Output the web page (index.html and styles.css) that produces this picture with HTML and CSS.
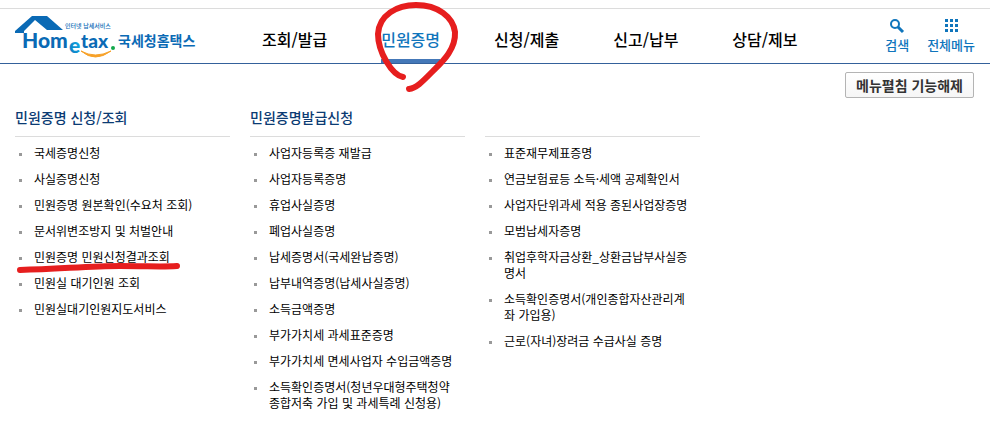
FILE: index.html
```html
<!DOCTYPE html>
<html lang="ko">

<head>
  <meta charset="UTF-8">
  <meta name="viewport" content="width=device-width, initial-scale=1.0">
  <title>국세청 홈택스</title>
  <link rel="stylesheet" href="styles.css">
</head>

<body>
  <header class="header">
    <a class="logo" href="#" aria-label="국세청홈택스">
      <svg width="182" height="46" viewBox="14 14 182 46">
        <defs>
          <linearGradient id="e-fill" x1="0" y1="1" x2="1" y2="0">
            <stop offset="0" stop-color="#0a73bd" />
            <stop offset="1" stop-color="#16b9ec" />
          </linearGradient>
        </defs>
        <path class="logo-blue" d="M32 16H47L63 30H47L35 20L24 31V33H15V31Z" />
        <text class="logo-blue logo-en" x="22" y="48" font-size="21">Hom</text>
        <text class="logo-en" x="69" y="53" font-size="21" fill="url(#e-fill)">e</text>
        <text class="logo-blue logo-en" x="81" y="48" font-size="19">tax</text>
        <circle cx="113" cy="48" r="2" fill="#12a84b" />
        <path d="M81 51Q95 63 111 51Q95 59 81 51Z" fill="#f7a128" stroke="#f7a128" />
        <text class="logo-blue logo-sub" x="65" y="28" font-size="6">인터넷 납세서비스</text>
        <text class="logo-blue logo-ko" x="118" y="46" font-size="14">국세청홈택스</text>
      </svg>
    </a>
    <nav class="gnb">
      <a href="#">조회/발급</a>
      <a class="on" href="#">민원증명
        <svg class="mark-circle" width="90" height="96" viewBox="370 0 90 96">
          <path d="M403 77C392 75 378 52 378 34C379 15 397 5 416 5C438 5 453 17 455 32C456 50 441 63 433 71C424 80 417 88 409 89" />
        </svg>
      </a>
      <a href="#">신청/제출</a>
      <a href="#">신고/납부</a>
      <a href="#">상담/제보</a>
    </nav>
    <div class="util">
      <a href="#">
        <svg width="16" height="16" viewBox="0 0 16 16">
          <circle cx="6" cy="6" r="4" fill="none" stroke="#0f75bc" stroke-width="2" />
          <path d="M9 9L14 14" stroke="#0f75bc" stroke-width="3" />
        </svg>
        검색
      </a>
      <a href="#">
        <svg width="16" height="16" viewBox="0 0 16 16">
          <path fill="#0f75bc" d="M2 1h3v3h-3zM7 1h3v3h-3zM12 1h3v3h-3zM2 6h3v3h-3zM7 6h3v3h-3zM12 6h3v3h-3zM2 11h3v3h-3zM7 11h3v3h-3zM12 11h3v3h-3z" />
        </svg>
        전체메뉴
      </a>
    </div>
  </header>

  <div class="option">
    <button class="btn-fold" type="button">메뉴펼침 기능해제</button>
  </div>

  <main class="menu">
    <section class="menu-col">
      <h2>민원증명 신청/조회</h2>
      <ul>
        <li><a href="#">국세증명신청</a></li>
        <li><a href="#">사실증명신청</a></li>
        <li><a href="#">민원증명 원본확인(수요처 조회)</a></li>
        <li><a href="#">문서위변조방지 및 처벌안내</a></li>
        <li>
          <a href="#">민원증명 민원신청결과조회</a>
          <svg class="mark-line" width="166" height="12" viewBox="16 262 166 12">
            <path d="M20 270C60 269 90 266 120 266S160 267 177 266" />
          </svg>
        </li>
        <li><a href="#">민원실 대기인원 조회</a></li>
        <li><a href="#">민원실대기인원지도서비스</a></li>
      </ul>
    </section>
    <section class="menu-col">
      <h2>민원증명발급신청</h2>
      <ul>
        <li><a href="#">사업자등록증 재발급</a></li>
        <li><a href="#">사업자등록증명</a></li>
        <li><a href="#">휴업사실증명</a></li>
        <li><a href="#">폐업사실증명</a></li>
        <li><a href="#">납세증명서(국세완납증명)</a></li>
        <li><a href="#">납부내역증명(납세사실증명)</a></li>
        <li><a href="#">소득금액증명</a></li>
        <li><a href="#">부가가치세 과세표준증명</a></li>
        <li><a href="#">부가가치세 면세사업자 수입금액증명</a></li>
        <li><a href="#">소득확인증명서(청년우대형주택청약<br>종합저축 가입 및 과세특례 신청용)</a></li>
      </ul>
    </section>
    <section class="menu-col">
      <h2></h2>
      <ul>
        <li><a href="#">표준재무제표증명</a></li>
        <li><a href="#">연금보험료등 소득·세액 공제확인서</a></li>
        <li><a href="#">사업자단위과세 적용 종된사업장증명</a></li>
        <li><a href="#">모범납세자증명</a></li>
        <li><a href="#">취업후학자금상환_상환금납부사실증<br>명서</a></li>
        <li><a href="#">소득확인증명서(개인종합자산관리계<br>좌 가입용)</a></li>
        <li><a href="#">근로(자녀)장려금 수급사실 증명</a></li>
      </ul>
    </section>
  </main>
</body>

</html>
```

FILE: styles.css
```css
* {
  margin: 0;
  padding: 0;
  box-sizing: border-box;
}

body {
  padding-top: 8px;
  background: #fff;
  color: #000;
  font-family: "Noto Sans CJK KR", sans-serif;
  font-size: 12px;
  line-height: 16px;
}

a {
  color: inherit;
  text-decoration: none;
}

ul {
  list-style: none;
}

.header {
  display: flex;
  height: 56px;
  padding: 0 15px 0 14px;
  border-top: 1px solid #dcdcdc;
  border-bottom: 1px solid #34619b;
}

.logo {
  padding-top: 5px;
}

.logo svg {
  display: block;
}

.logo-blue {
  fill: #0a6ab5;
}

.logo-en {
  font-family: Lato, sans-serif;
  font-weight: 900;
}

.logo-ko {
  font-weight: 700;
}

.logo-sub {
  font-weight: 500;
}

.gnb {
  display: flex;
  gap: 54px;
  margin-left: 66px;
  font-size: 16px;
  font-weight: 500;
  line-height: 24px;
}

.gnb a {
  position: relative;
  padding-top: 18px;
}

.gnb .on {
  color: #0f75bc;
  border-bottom: 4px solid #4478b8;
}

.util {
  display: flex;
  gap: 18px;
  margin-left: auto;
  color: #0f75bc;
  font-size: 13px;
  font-weight: 500;
}

.util a {
  display: flex;
  flex-direction: column;
  align-items: center;
  gap: 3px;
  padding-top: 9px;
}

.option {
  display: flex;
  justify-content: flex-end;
  padding: 8px 16px 0;
}

.btn-fold {
  height: 26px;
  padding: 0 10px;
  border: 1px solid #b4b4b4;
  border-radius: 2px;
  background: linear-gradient(#fff, #f6f6f6);
  color: #333;
  font-family: inherit;
  font-size: 14px;
  font-weight: 700;
  line-height: 22px;
}

.menu {
  display: flex;
  gap: 20px;
  padding: 8px 15px 16px;
}

.menu-col {
  flex: 0 1 215px;
}

.menu-col h2 {
  height: 31px;
  border-bottom: 1px solid #dcdcdc;
  color: #0b3b73;
  font-size: 14px;
  font-weight: 500;
  line-height: 22px;
}

.menu-col ul {
  display: flex;
  flex-direction: column;
  gap: 10px;
  padding-top: 8px;
}

.menu-col li {
  position: relative;
  display: flex;
  gap: 12px;
  padding-left: 4px;
  white-space: nowrap;
}

.menu-col li::before {
  content: "";
  width: 3px;
  height: 3px;
  margin-top: 8px;
  background: #999;
}

/* pen marks over the menu */
.mark-circle,
.mark-line {
  position: absolute;
  fill: none;
  stroke: #e61e1e;
  stroke-width: 6;
  stroke-linecap: round;
  pointer-events: none;
}

.mark-circle {
  top: -9px;
  left: -11px;
  z-index: 1;
}

.mark-line {
  top: 13px;
  left: 1px;
}
```
